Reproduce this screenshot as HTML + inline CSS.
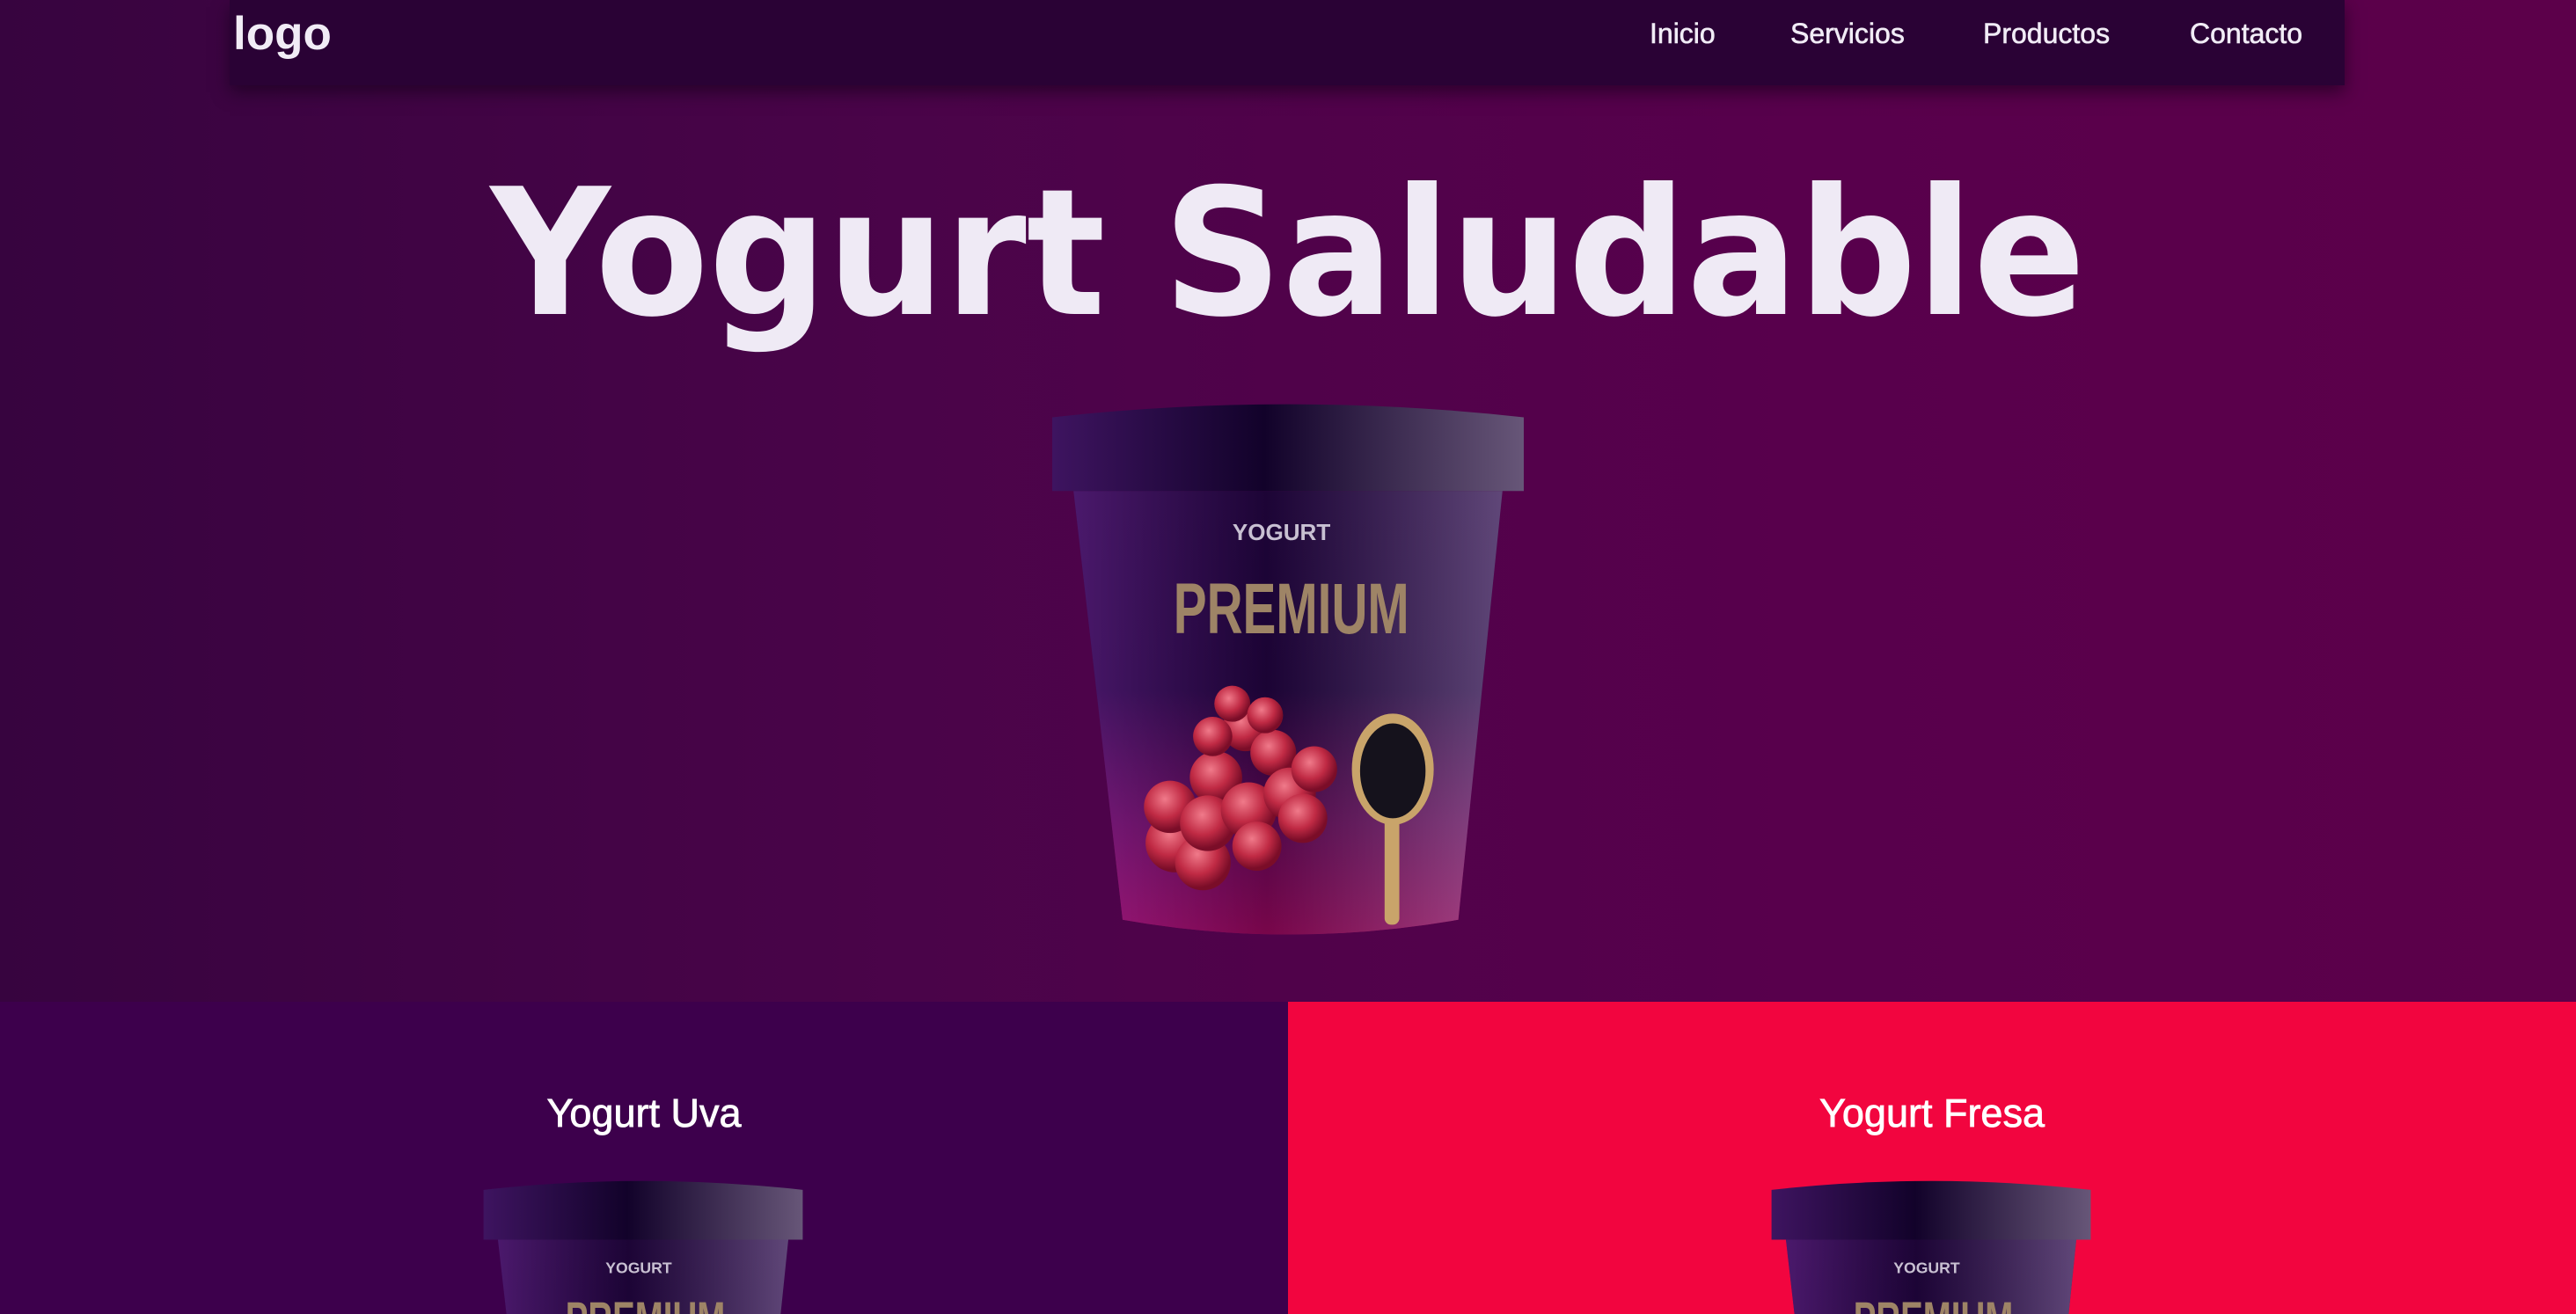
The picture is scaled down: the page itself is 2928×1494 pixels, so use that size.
<!DOCTYPE html>
<html><head><meta charset="utf-8"><style>
*{margin:0;padding:0;box-sizing:border-box}
html,body{width:2928px;height:1494px;overflow:hidden}
body{font-family:"Liberation Sans",sans-serif;background:#3d004c;position:relative}
.wrap{position:absolute;left:0;top:0;width:2928px;height:1494px;overflow:hidden}
.hero{position:absolute;left:0;top:0;width:2928px;height:1139px;background:linear-gradient(90deg,#37043f 0%,#4a0449 35%,#58004c 70%,#5c004a 100%)}
.nav{position:absolute;left:261px;top:0;width:2404px;height:97px;background:#2a0235;box-shadow:0 8px 18px rgba(20,0,25,.6)}
.logo{position:absolute;left:4px;top:8px;font-size:53px;font-weight:bold;color:#f1ecf6}
.nav a{position:absolute;top:20px;font-size:32px;color:#f1ecf6;text-decoration:none;-webkit-text-stroke:0.6px #f1ecf6}
h1{position:absolute;left:0;width:2928px;top:189px;text-align:center;font-family:"DejaVu Sans",sans-serif;font-weight:bold;font-size:200px;color:#efeaf5;line-height:200px;transform:scaleX(0.94);transform-origin:1464px 0}
.left{position:absolute;left:0;top:1139px;width:1464px;height:355px;background:#3d004c}
.right{position:absolute;left:1464px;top:1139px;width:1464px;height:355px;background:#f2053f}
.lbl{position:absolute;top:1240px;width:1464px;text-align:center;font-size:45px;color:#fff;-webkit-text-stroke:0.8px #fff}
svg{position:absolute}
</style></head><body><div class="wrap">
<div class="hero"></div>
<div class="nav"><div class="logo">logo</div>
<a style="left:1614px">Inicio</a><a style="left:1774px">Servicios</a><a style="left:1993px">Productos</a><a style="left:2228px">Contacto</a></div>
<h1>Yogurt Saludable</h1>
<svg width="0" height="0"><defs>
<linearGradient id="bv" x1="0" y1="0" x2="0" y2="1"><stop offset="0" stop-color="#2c0848"/><stop offset=".45" stop-color="#2a0645"/><stop offset=".75" stop-color="#8a0c68"/><stop offset="1" stop-color="#d20a6c"/></linearGradient>
<linearGradient id="bh" x1="0" y1="0" x2="1" y2="0"><stop offset="0" stop-color="#6a2a90" stop-opacity=".5"/><stop offset=".45" stop-color="#0a0020" stop-opacity=".45"/><stop offset="1" stop-color="#8a7aa0" stop-opacity=".55"/></linearGradient>
<linearGradient id="lid" x1="0" y1="0" x2="1" y2="0"><stop offset="0" stop-color="#3e1460"/><stop offset=".45" stop-color="#12022a"/><stop offset="1" stop-color="#675678"/></linearGradient>
<radialGradient id="gr" cx=".4" cy=".35" r=".6"><stop offset="0" stop-color="#f07a8a"/><stop offset=".6" stop-color="#c02a44"/><stop offset="1" stop-color="#7a0d28"/></radialGradient>
<g id="cup">
<path d="M13 55 L275 55 L248 317 Q144 335 43 317 Z" fill="url(#bv)"/>
<path d="M13 55 L275 55 L248 317 Q144 335 43 317 Z" fill="url(#bh)"/>
<path d="M0 10 Q144 -6 288 10 L288 55 L0 55 Z" fill="url(#lid)"/>
<text x="140" y="85" text-anchor="middle" font-family="Liberation Sans" font-weight="bold" font-size="14" fill="#c8c0d2">YOGURT</text>
<text x="146" y="142" text-anchor="middle" font-family="Liberation Sans" font-weight="bold" font-size="44" fill="#9e8466" textLength="144" lengthAdjust="spacingAndGlyphs">PREMIUM</text>
<g fill="url(#gr)">
<circle cx="75" cy="270" r="18"/><circle cx="92" cy="282" r="17"/><circle cx="72" cy="248" r="16"/>
<circle cx="100" cy="230" r="16"/><circle cx="95" cy="258" r="17"/><circle cx="120" cy="250" r="17"/>
<circle cx="118" cy="200" r="14"/><circle cx="135" cy="215" r="14"/><circle cx="145" cy="240" r="16"/>
<circle cx="160" cy="225" r="14"/><circle cx="153" cy="255" r="15"/><circle cx="125" cy="272" r="15"/>
<circle cx="98" cy="205" r="12"/><circle cx="110" cy="185" r="11"/><circle cx="130" cy="192" r="11"/>
</g>
<rect x="203" y="250" width="9" height="70" rx="4" fill="#c9a46a"/>
<ellipse cx="208" cy="225" rx="25" ry="34" fill="#c9a46a"/>
<ellipse cx="208" cy="226" rx="20" ry="29" fill="#15121c"/>
</g></defs></svg>
<svg style="left:1195px;top:454px" width="538" height="616" viewBox="0 -1 288 331"><use href="#cup"/></svg>
<div class="left"></div><div class="right"></div>
<div class="lbl" style="left:0">Yogurt Uva</div>
<div class="lbl" style="left:1464px">Yogurt Fresa</div>
<svg style="left:549px;top:1339px" width="364" height="417" viewBox="0 -1 288 331"><use href="#cup"/></svg>
<svg style="left:2013px;top:1339px" width="364" height="417" viewBox="0 -1 288 331"><use href="#cup"/></svg>
</div></body></html>
